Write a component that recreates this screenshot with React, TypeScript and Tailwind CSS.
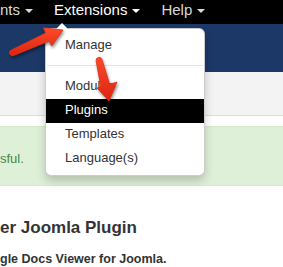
import React from "react";

function Caret({ color }: { color: string }) {
  return (
    <span
      className="ml-[5px] mt-[2px] inline-block h-0 w-0 border-x-[4px] border-t-[4px] border-x-transparent"
      style={{ borderTopColor: color }}
    />
  );
}

export default function App() {
  const font = { fontFamily: '"Liberation Sans", Arial, sans-serif' };
  return (
    <div className="relative h-[267px] w-[283px] overflow-hidden bg-white" style={font}>
      {/* top nav */}
      <div className="flex h-[24px] items-start bg-black text-[15px] leading-[20px]">
        <div className="flex items-center text-[#d9d9d9]">
          <span>nts</span>
          <Caret color="#d9d9d9" />
        </div>
        <div className="ml-[21px] flex items-center text-white">
          <span>Extensions</span>
          <Caret color="#ffffff" />
        </div>
        <div className="ml-[21px] flex items-center text-[#d9d9d9]">
          <span>Help</span>
          <Caret color="#d9d9d9" />
        </div>
      </div>
      {/* blue header */}
      <div className="h-[48px] bg-[#1b3867]" />
      {/* subhead */}
      <div className="h-[44px] border-b border-[#dddddd] bg-[#f3f3f3]" />
      {/* alert */}
      <div className="mt-[10px] h-[60px] border-y border-[#d6e9c6] bg-[#dff0d8] pt-[23px] text-[13px] leading-[18px] text-[#468847]">
        sful.
      </div>
      {/* content */}
      <div className="mt-[32px] text-[#333333]">
        <h2 className="text-[17px] font-bold leading-[20px]">er Joomla Plugin</h2>
        <p className="mt-[13px] text-[12.5px] font-bold leading-[16px]">gle Docs Viewer for Joomla.</p>
      </div>

      {/* dropdown menu */}
      <div className="absolute left-[45px] top-[28px] w-[160px] rounded-b-[6px] rounded-tr-[6px] border border-black/20 bg-white pb-[4px] pt-[5px] text-[13px] leading-[20px] text-[#333333] shadow-[0_5px_10px_rgba(0,0,0,0.2)]">
        <span className="absolute left-[9px] top-[-7px] h-0 w-0 border-x-[7px] border-b-[7px] border-x-transparent border-b-black/20" />
        <span className="absolute left-[10px] top-[-6px] h-0 w-0 border-x-[6px] border-b-[6px] border-x-transparent border-b-white" />
        <div className="px-[19px] pb-[3px] pt-[1px]">Manage</div>
        <div className="mx-px mb-[9px] mt-[7px] h-px bg-[#e5e5e5]" />
        <div className="px-[19px] pb-[3px] pt-[1px]">Modules</div>
        <div className="bg-black px-[19px] pb-[3px] pt-[1px] text-white">Plugins</div>
        <div className="px-[19px] pb-[3px] pt-[1px]">Templates</div>
        <div className="px-[19px] pb-[3px] pt-[1px]">Language(s)</div>
      </div>

      {/* annotation arrows */}
      <svg
        className="pointer-events-none absolute left-0 top-0 drop-shadow-[1px_2px_1.5px_rgba(0,0,0,0.45)]"
        width="283"
        height="267"
        viewBox="0 0 283 267"
      >
        <defs>
          <linearGradient id="ag" x1="0" y1="0" x2="0" y2="1">
            <stop offset="0" stopColor="#ff4a28" />
            <stop offset="1" stopColor="#dc2410" />
          </linearGradient>
        </defs>
        <path
          d="M10.8 50.3 L45.7 32.9 L43.4 27.9 L63 30 L51.6 46.1 L49.3 41.1 L13.2 55.7 A3 3 0 0 1 10.8 50.3 Z"
          fill="url(#ag)"
          stroke="#e0301a"
          strokeWidth="0.8"
          strokeLinejoin="round"
        />
        <path
          d="M101.9 59.3 L109.6 84.3 L117 82 L109 101 L97 88 L100.8 86.5 L96.1 60.7 A3 3 0 0 1 101.9 59.3 Z"
          fill="url(#ag)"
          stroke="#e0301a"
          strokeWidth="0.8"
          strokeLinejoin="round"
        />
      </svg>
    </div>
  );
}
